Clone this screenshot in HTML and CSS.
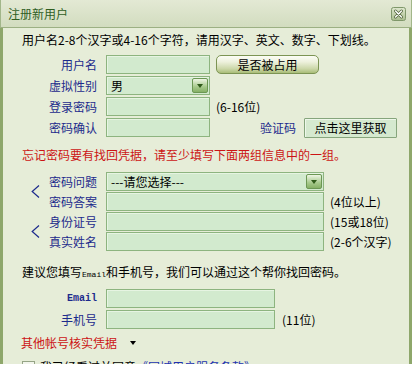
FILE: index.html
```html
<!DOCTYPE html>
<html lang="zh-CN">
<head>
<meta charset="utf-8">
<title>注册新用户</title>
<link rel="stylesheet" href="styles.css">
</head>
<body>
<div class="window">
  <div class="titlebar">
    <span class="title">注册新用户</span>
    <span class="close">
      <svg width="15" height="14" viewBox="0 0 15 14">
        <defs>
          <linearGradient id="cg" x1="0" y1="0" x2="0" y2="1">
            <stop offset="0" stop-color="#dfe8cf"/>
            <stop offset="1" stop-color="#a9bd8e"/>
          </linearGradient>
        </defs>
        <rect x="0.5" y="0.5" width="14" height="13" rx="2" fill="url(#cg)" stroke="#7f976a"/>
        <path d="M4.5 4 L10.5 10 M10.5 4 L4.5 10" stroke="#55683f" stroke-width="3" stroke-linecap="round"/>
        <path d="M4.5 4 L10.5 10 M10.5 4 L4.5 10" stroke="#ffffff" stroke-width="1.4" stroke-linecap="round"/>
      </svg>
    </span>
  </div>
  <div class="content">
    <p class="intro">用户名2-8个汉字或4-16个字符，请用汉字、英文、数字、下划线。</p>

    <div class="rows rows-main">
      <div class="row">
        <span class="lbl">用户名</span>
        <span class="input w-short"></span>
        <button class="btn-check">是否被占用</button>
      </div>
      <div class="row">
        <span class="lbl">虚拟性别</span>
        <span class="select w-short"><span class="sel-text">男</span><span class="dd"></span></span>
      </div>
      <div class="row">
        <span class="lbl">登录密码</span>
        <span class="input w-short"></span>
        <span class="hint">(6-16位)</span>
      </div>
      <div class="row">
        <span class="lbl">密码确认</span>
        <span class="input w-short"></span>
        <span class="lbl-inline">验证码</span>
        <button class="btn-code">点击这里获取</button>
      </div>
    </div>

    <p class="warn">忘记密码要有找回凭据，请至少填写下面两组信息中的一组。</p>

    <div class="group group-first">
      <span class="brace"><svg width="9" height="13" viewBox="0 0 9 13"><path d="M8 0.5 L1.2 6.5 L8 12.5" fill="none" stroke="#1c2a8c" stroke-width="1.2"/></svg></span>
      <div class="rows rows-group">
        <div class="row">
          <span class="lbl lbl-g">密码问题</span>
          <span class="select w-long"><span class="sel-text">---请您选择---</span><span class="dd"></span></span>
        </div>
        <div class="row">
          <span class="lbl lbl-g">密码答案</span>
          <span class="input w-long"></span>
          <span class="hint">(4位以上)</span>
        </div>
      </div>
    </div>

    <div class="group">
      <span class="brace"><svg width="9" height="13" viewBox="0 0 9 13"><path d="M8 0.5 L1.2 6.5 L8 12.5" fill="none" stroke="#1c2a8c" stroke-width="1.2"/></svg></span>
      <div class="rows rows-group">
        <div class="row">
          <span class="lbl lbl-g">身份证号</span>
          <span class="input w-long"></span>
          <span class="hint">(15或18位)</span>
        </div>
        <div class="row">
          <span class="lbl lbl-g">真实姓名</span>
          <span class="input w-long"></span>
          <span class="hint">(2-6个汉字)</span>
        </div>
      </div>
    </div>

    <p class="suggest">建议您填写<span class="mono-s">Email</span>和手机号，我们可以通过这个帮你找回密码。</p>

    <div class="rows rows-contact">
      <div class="row">
        <span class="lbl lbl-mono">Email</span>
        <span class="input w-mid"></span>
      </div>
      <div class="row">
        <span class="lbl">手机号</span>
        <span class="input w-mid"></span>
        <span class="hint hint-phone">(11位)</span>
      </div>
    </div>

    <p class="other">其他帐号核实凭据<span class="tri"></span></p>

    <p class="agree"><span class="checkbox"></span>我已经看过并同意<span class="terms">《同城用户服务条款》</span></p>
  </div>
</div>
</body>
</html>
```

FILE: styles.css
```css
* {
  box-sizing: border-box;
  margin: 0;
  padding: 0;
}

html, body {
  background: #ffffff;
}

body {
  margin: 0;
  font-family: "Noto Sans CJK SC", "Noto Sans", sans-serif;
  font-size: 12px;
  line-height: 16px;
  color: #000;
}

.window {
  width: 412px;
  height: 364px;
  overflow: hidden;
  display: flex;
  flex-direction: column;
  background: #e6edd8;
}

.titlebar {
  flex: none;
  height: 28px;
  display: flex;
  align-items: center;
  justify-content: space-between;
  padding: 0 5px 0 7px;
  background: linear-gradient(#e3e9d4, #d2dcbf);
  border-bottom: 1px solid #9cb083;
  border-left: 1px solid #a2b68a;
  border-right: 1px solid #a2b68a;
}

.title {
  color: #2f5e1f;
  font-size: 12px;
  line-height: 14px;
}

.close {
  display: flex;
  width: 15px;
  height: 14px;
}

.content {
  flex: 1;
  border-left: 3px solid #8ea76b;
  border-right: 3px solid #8ea76b;
  padding: 4px 0 0 19px;
}

.intro {
  height: 16px;
}

.rows {
  display: flex;
  flex-direction: column;
}

.rows-main {
  margin-top: 7px;
  gap: 2px;
}

.rows-group {
  gap: 1px;
}

.rows-contact {
  margin-top: 6px;
  gap: 2px;
}

.row {
  display: flex;
  align-items: center;
  height: 19px;
}

.lbl {
  flex: none;
  width: 75px;
  margin-right: 9px;
  text-align: right;
  color: #1c2a8c;
}

.lbl-g {
  width: 48px;
}

.lbl-mono {
  font-family: "Liberation Mono", monospace;
  font-size: 10px;
  font-weight: bold;
}

.input,
.select {
  flex: none;
  height: 19px;
  background: #d2eace;
  border: 1px solid #8db47f;
  box-shadow: inset 1px 1px 0 #e6f4e2;
}

.select {
  display: flex;
  align-items: center;
  justify-content: space-between;
  padding: 0 1px 0 4px;
}

.w-short { width: 104px; }
.w-long { width: 218px; }
.w-mid { width: 169px; }

.sel-text {
  color: #000;
}

.dd {
  width: 16px;
  height: 15px;
  border: 1px solid #6c9754;
  border-radius: 2px;
  background: linear-gradient(#eef5e4, #a6c98b 60%, #86b066);
  display: flex;
  align-items: center;
  justify-content: center;
}

.dd::after {
  content: "";
  width: 0;
  height: 0;
  border-left: 3.5px solid transparent;
  border-right: 3.5px solid transparent;
  border-top: 4px solid #2f5a1a;
}

.btn-check {
  margin-left: 6px;
  width: 103px;
  height: 19px;
  font: inherit;
  color: #000;
  border: 1px solid #7c9453;
  border-radius: 5px;
  background: linear-gradient(#fcfdf6 0%, #edf1dc 35%, #cbd7a8 75%, #a9bd78 100%);
}

.hint {
  margin-left: 6px;
  color: #000;
}

.hint-phone {
  margin-left: 7px;
}

.lbl-inline {
  margin-left: 50px;
  color: #1c2a8c;
}

.btn-code {
  margin-left: 8px;
  width: 93px;
  height: 20px;
  font: inherit;
  color: #000;
  border: 1px solid #86a57c;
  border-radius: 1px;
  background: #d5e9cf;
  box-shadow: inset 1px 1px 0 #eef7ea;
}

.warn {
  margin-top: 10px;
  color: #cc1414;
}

.group {
  display: flex;
  align-items: center;
}

.group-first {
  margin-top: 9px;
  margin-bottom: 1px;
}

.brace {
  flex: none;
  width: 27px;
  display: flex;
  justify-content: center;
  padding-right: 1px;
}

.suggest {
  margin-top: 13px;
}

.mono-s {
  font-family: "Liberation Mono", monospace;
  font-size: 8px;
}

.other {
  margin-top: 6px;
  margin-left: -1px;
  color: #cc1414;
  display: flex;
  align-items: center;
}

.tri {
  margin-left: 13px;
  width: 0;
  height: 0;
  border-left: 3.5px solid transparent;
  border-right: 3.5px solid transparent;
  border-top: 4px solid #000;
}

.agree {
  margin-top: 8px;
  display: flex;
  align-items: center;
}

.checkbox {
  width: 13px;
  height: 13px;
  margin-right: 5px;
  border: 1px solid #95a486;
  background: #f2f5ec;
}

.terms {
  color: #2232b0;
}
```
